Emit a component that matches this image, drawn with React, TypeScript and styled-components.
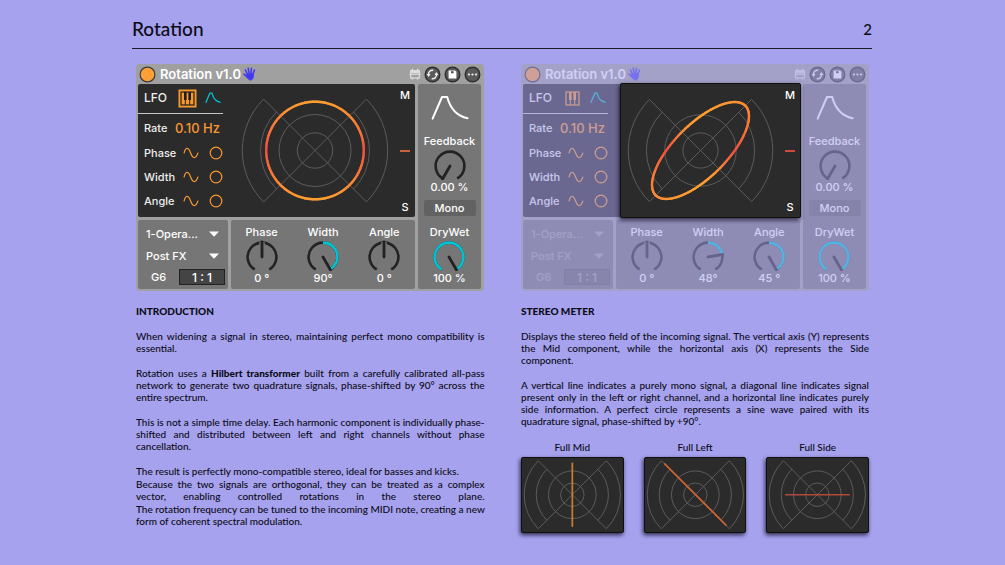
import React, { useId } from "react";
import styled, { createGlobalStyle, css } from "styled-components";

const GlobalStyle = createGlobalStyle`
  * { box-sizing: border-box; }
  body {
    margin: 0;
    background: #a6a2ee;
    color: #0b0a14;
    font-family: Lato, "Liberation Sans", sans-serif;
  }
  h1, h2, p, figure { margin: 0; }
  button, input, select { font: inherit; color: inherit; margin: 0; padding: 0; border: 0; background: none; }
  svg { display: block; }
`;

const ORANGE = "#f9982f";
const CYAN = "#00c4d4";
const INK = "#222222";

/* ---------- page ---------- */

const Page = styled.main`
  padding: 16px 133px 30px 132px;
`;

const TopBar = styled.header`
  display: flex;
  align-items: center;
  justify-content: space-between;
  height: 33px;
  padding-bottom: 6px;
  border-bottom: 1px solid #1b1a26;
`;

const Title = styled.h1`
  font-size: 19px;
  line-height: 26px;
  font-weight: 500;
`;

const PageNumber = styled.span`
  font-size: 15px;
  line-height: 26px;
  font-weight: 500;
`;

const Columns = styled.div`
  display: grid;
  grid-template-columns: 1fr 1fr;
  column-gap: 37px;
  padding: 15px 3px 0 4px;
`;

const Column = styled.section`
  min-width: 0;
`;

const Heading = styled.h2`
  margin: 14px 0 13px;
  font-size: 10px;
  line-height: 12px;
  font-weight: 900;
`;

const Copy = styled.div`
  display: grid;
  row-gap: 13px;
  font-size: 10px;
  line-height: 12px;
  font-weight: 500;
  text-align: justify;
`;

const Stanza = styled.div`
  display: grid;
  row-gap: 1px;
`;

const Paragraph = styled.p<{ $fill?: boolean }>`
  text-align-last: ${(p) => (p.$fill ? "justify" : "auto")};
`;

const Unbroken = styled.span`
  white-space: nowrap;
`;

const Strong = styled.strong`
  font-weight: 900;
`;

/* ---------- device frame ---------- */

const DeviceFrame = styled.div`
  position: relative;
  font-family: Inter, "Liberation Sans", sans-serif;
  font-size: 11px;
  line-height: 14px;
  font-weight: 500;
  color: #ffffff;
`;

const DeviceShell = styled.div<{ $dim: boolean }>`
  padding: 0 3px 2px 2px;
  border-radius: 4px;
  background: #a0a0a0;
  opacity: ${(p) => (p.$dim ? 0.48 : 1)};
`;

const DeviceHeader = styled.div`
  display: flex;
  align-items: center;
  height: 20px;
  padding-left: 1px;
`;

const DeviceName = styled.span`
  margin: 0 2px 0 4px;
  font-size: 13px;
  font-weight: 600;
`;

const HeaderIcons = styled.div`
  display: flex;
  align-items: center;
  gap: 3px;
  margin-left: auto;
`;

const IconButton = styled.button`
  display: block;
  cursor: pointer;
`;

const DeviceBody = styled.div`
  display: grid;
  grid-template-columns: 90px 1fr 63px;
  grid-template-rows: 133px 69px;
  gap: 3px;
`;

const panel = css`
  border-radius: 2px;
  background: #767676;
`;

const Screen = styled.div`
  grid-column: 1 / 3;
  display: flex;
  border-radius: 2px;
  background: #2b2b2b;
`;

const RoutingPanel = styled.div<{ $faded: boolean }>`
  ${panel}
  display: grid;
  align-content: space-between;
  padding: 6px 3px 4px 8px;

  & > * {
    opacity: ${(p) => (p.$faded ? 0.3 : 1)};
  }
`;

const KnobPanel = styled.div`
  ${panel}
  display: grid;
  grid-template-columns: repeat(3, 1fr);
  align-items: end;
`;

const OutputPanel = styled.div`
  ${panel}
  grid-column: 3;
  grid-row: 1 / 3;
  display: flex;
  flex-direction: column;
  align-items: center;
  padding-top: 11px;
`;

const OutputKnob = styled.div`
  margin-top: 13px;
`;

const MonoButton = styled.button`
  width: 52px;
  height: 16px;
  margin: 2px 0 auto;
  border-radius: 2px;
  background: #626262;
  text-align: center;
`;

/* ---------- LFO controls ---------- */

const LfoColumn = styled.div`
  flex: 0 0 97px;
`;

const LfoTop = styled.div`
  display: flex;
  align-items: center;
  width: 85px;
  height: 30px;
  padding: 0 2px 1px 6px;
  border-bottom: 1px solid #c8c8c8;
  font-size: 12px;
  color: #eeeeee;
`;

const LfoIcons = styled.div`
  display: flex;
  align-items: center;
  gap: 8px;
  margin-left: auto;
`;

const LfoRow = styled.div`
  display: flex;
  align-items: center;
  justify-content: space-between;
  width: 85px;
  height: 24px;
  padding: 0 0 0 6px;
  color: #eeeeee;
`;

const RateRow = styled(LfoRow)`
  height: 27px;
`;

const RateInput = styled.input`
  width: 48px;
  font-size: 13px;
  color: ${ORANGE};
`;

const Shapes = styled.div`
  display: flex;
  align-items: center;
  gap: 10px;
`;

/* ---------- routing ---------- */

const SelectWrap = styled.label`
  display: flex;
  align-items: center;
  height: 16px;
  padding-right: 6px;
`;

const Select = styled.select`
  flex: 1;
  min-width: 0;
  appearance: none;
  outline: none;
`;

const NoteRow = styled.div`
  display: flex;
  align-items: center;
  justify-content: space-between;
  padding-left: 5px;
`;

const RatioInput = styled.input`
  width: 46px;
  height: 16px;
  border: 1px solid #222222;
  background: #444444;
  font-size: 12px;
  text-align: center;
`;

/* ---------- knob ---------- */

const KnobLabel = styled.label`
  position: relative;
  display: flex;
  flex-direction: column;
  align-items: center;
  padding-bottom: 4px;
  white-space: nowrap;
`;

const KnobInput = styled.input`
  position: absolute;
  inset: 0;
  width: 100%;
  height: 100%;
  opacity: 0;
`;

const KnobName = styled.span`
  height: 15px;
`;

const polar = (cx: number, cy: number, r: number, deg: number) => {
  const a = ((deg - 90) * Math.PI) / 180;
  return [cx + r * Math.cos(a), cy + r * Math.sin(a)];
};

const arc = (cx: number, cy: number, r: number, from: number, to: number) => {
  const [x1, y1] = polar(cx, cy, r, from);
  const [x2, y2] = polar(cx, cy, r, to);
  return `M${x1} ${y1}A${r} ${r} 0 ${to - from > 180 ? 1 : 0} 1 ${x2} ${y2}`;
};

interface KnobProps {
  name: string;
  value: string;
  /* pointer angle, clockwise from the top, from -150 to 150 */
  angle: number;
  origin?: number;
}

function Knob({ name, value, angle, origin = 0 }: KnobProps) {
  const [nx, ny] = polar(17, 17, 15, angle);
  return (
    <KnobLabel>
      <KnobName>{name}</KnobName>
      <svg width="34" height="31" viewBox="0 0 34 31" fill="none" strokeWidth="2.6">
        <path d={arc(17, 17, 14.4, -150, 150)} stroke={INK} />
        {angle > origin && <path d={arc(17, 17, 14.4, origin, angle)} stroke={CYAN} />}
        {angle === 0 && <path d={`M17 17L${nx} ${ny}`} stroke="#767676" strokeWidth="5.4" />}
        <path d={`M17 17L${nx} ${ny}`} stroke={INK} strokeWidth="2.8" strokeLinecap="round" />
      </svg>
      <span>{value}</span>
      <KnobInput type="range" min={-150} max={150} defaultValue={angle} />
    </KnobLabel>
  );
}

/* ---------- meter ---------- */

const MeterBox = styled.div`
  display: flex;
  flex: 1;
  min-width: 0;
`;

const SpotlightMeter = styled(MeterBox)`
  position: absolute;
  top: 19px;
  left: 99px;
  right: 68px;
  height: 135px;
  border: 1px solid #101010;
  border-radius: 2px;
  background: #2b2b2b;
  box-shadow: -1px 2px 4px rgba(10, 8, 30, 0.8);
`;

const MeterSvg = styled.svg`
  flex: 1;
  min-width: 0;
  height: 133px;
`;

const MeterScale = styled.div`
  display: flex;
  flex-direction: column;
  align-items: center;
  justify-content: space-between;
  width: 20px;
  padding: 4px 0 3px;
`;

const Tick = styled.i<{ $color: string }>`
  width: 10px;
  height: 2px;
  background: ${(p) => p.$color};
`;

function PolarGrid({ cx, cy, width = 1 }: { cx: number; cy: number; width?: number }) {
  const d = 72.7 * Math.SQRT1_2;
  return (
    <g fill="none" stroke="#5c5c5c" strokeWidth={width}>
      <circle cx={cx} cy={cy} r="17.7" />
      <circle cx={cx} cy={cy} r="36" />
      {[54.5, 72.7].map((r) => (
        <g key={r}>
          <path d={arc(cx, cy, r, 45, 135)} />
          <path d={arc(cx, cy, r, 225, 315)} />
        </g>
      ))}
      <path d={`M${cx - d} ${cy - d}L${cx + d} ${cy + d}M${cx - d} ${cy + d}L${cx + d} ${cy - d}`} />
    </g>
  );
}

/* Figure traced by two sines; the hue moves from orange (mid) to red (side). */
function Trace({ cx, cy, phase }: { cx: number; cy: number; phase: number }) {
  const steps = 120;
  const point = (i: number) => {
    const t = (i / steps) * Math.PI * 2;
    return [48.8 * Math.cos(t), -48.8 * Math.cos(t + (phase * Math.PI) / 180)];
  };
  return (
    <g strokeWidth="2.4" strokeLinecap="round">
      {Array.from({ length: steps }, (_, i) => {
        const [x1, y1] = point(i);
        const [x2, y2] = point(i + 1);
        const angle = Math.atan2(Math.abs(y1), Math.abs(x1)) / (Math.PI / 2);
        const side = (1 - angle) ** 2;
        const mix = (a: number, b: number) => Math.round(a + (b - a) * side);
        return (
          <path
            key={i}
            d={`M${cx + x1} ${cy + y1}L${cx + x2} ${cy + y2}`}
            stroke={`rgb(${mix(255, 238)}, ${mix(158, 78)}, ${mix(48, 64)})`}
          />
        );
      })}
    </g>
  );
}

function MeterContent({ phase, tick }: { phase: number; tick: string }) {
  return (
    <>
      <MeterSvg viewBox="0 0 160 133">
        <PolarGrid cx={80} cy={66.5} />
        <Trace cx={80} cy={66.5} phase={phase} />
      </MeterSvg>
      <MeterScale>
        <span>M</span>
        <Tick $color={tick} />
        <span>S</span>
      </MeterScale>
    </>
  );
}

/* ---------- icons ---------- */

const HandIcon = () => (
  <svg width="13" height="14" viewBox="0 0 13 14" fill="none" stroke="#4338f0" strokeLinecap="round">
    <path d="M4.6 7.6L2.4 3M6.2 6.6L5.2 1.4M8 6.6L8.4 1.4M9.8 7.4L11.4 3.2" strokeWidth="1.6" />
    <path d="M4.8 10.4L1 7.2" strokeWidth="1.7" />
    <path d="M3.9 7.2L10.2 6.6L10.5 9.6C10.2 11.6 9.2 13.2 7.6 13.2C5.6 13.2 4.6 11.4 3.4 9.8Z" fill="#4338f0" strokeWidth=".6" />
  </svg>
);

const PowerIcon = () => (
  <svg width="17" height="17" viewBox="0 0 17 17">
    <circle cx="8.5" cy="8.5" r="7.4" fill="#ff9f38" stroke="#3a3a3a" strokeWidth="1.2" />
  </svg>
);

const RackIcon = () => (
  <svg width="12" height="12" viewBox="0 0 12 12" fill="none" stroke="#dcdcdc">
    <rect x="1.6" y="2.6" width="8.8" height="7.4" strokeWidth="1.2" />
    <path d="M3.4 .8v2.4M8.6 .8v2.4M3.4 9.6v1.8M8.6 9.6v1.8" strokeWidth="1.4" />
    <path d="M.4 6.3h11.2" strokeWidth="1.2" />
    <path d="M1.6 4h8.8" strokeWidth="2.4" />
  </svg>
);

const RoundIcon = ({ children }: { children: React.ReactNode }) => (
  <svg width="17" height="17" viewBox="0 0 17 17" fill="none">
    <circle cx="8.5" cy="8.5" r="7.3" fill="#5a5a5a" stroke="#2e2e2e" strokeWidth="1.4" />
    {children}
  </svg>
);

const SwapGlyph = () => (
  <RoundIcon>
    <path d="M9.3 4.3C6.4 3.8 4.3 5.8 4.5 8.6M7.7 12.7C10.6 13.2 12.7 11.2 12.5 8.4" stroke="#f0f0f0" strokeWidth="1.4" />
    <path d="M2.6 8h3.9L4.7 11zM14.4 9h-3.9L12.3 6z" fill="#f0f0f0" />
  </RoundIcon>
);

const SaveGlyph = () => (
  <RoundIcon>
    <path d="M4.6 4.4h6.4l1.4 1.4v6.6H4.6z" fill="#ffffff" />
    <path d="M7 5.2h2.6v2H7z" fill="#4a4a4a" />
  </RoundIcon>
);

const MoreGlyph = () => (
  <RoundIcon>
    <g fill="#f4f4f4">
      <circle cx="5" cy="8.5" r="1.1" />
      <circle cx="8.5" cy="8.5" r="1.1" />
      <circle cx="12" cy="8.5" r="1.1" />
    </g>
  </RoundIcon>
);

const KeysIcon = ({ active }: { active: boolean }) => {
  const ink = active ? "#1d1d1d" : ORANGE;
  return (
    <svg width="19" height="19" viewBox="0 0 19 19">
      {active && <rect x=".5" y=".5" width="18" height="18" fill={ORANGE} />}
      <rect x="3" y="3" width="13" height="13" fill="none" stroke={ink} strokeWidth="1.2" />
      <path d="M7.3 3v13M11.7 3v13" stroke={ink} strokeWidth="1" />
      <path d="M7.3 3v8M11.7 3v8" stroke={ink} strokeWidth="2.6" />
    </svg>
  );
};

const CurveIcon = () => (
  <svg width="16" height="12" viewBox="0 0 16 12" fill="none" stroke={CYAN} strokeWidth="1.3">
    <path d="M.8 10.8L4.8 1.2H7C8 5.6 10.2 9.8 15.6 10.3" strokeLinejoin="round" />
  </svg>
);

const EnvelopeIcon = () => (
  <svg width="38" height="26" viewBox="0 0 38 26" fill="none" stroke="#ffffff" strokeWidth="2">
    <path d="M1.6 23.6L11 2h5.2C19 12.4 24.5 20.8 36.6 23.2" strokeLinecap="round" strokeLinejoin="round" />
  </svg>
);

const SineIcon = () => (
  <svg width="16" height="12" viewBox="0 0 16 12" fill="none" stroke={ORANGE} strokeWidth="1.2">
    <path d="M1 6.4C2.5 -.2 5.3 -.2 7.6 6C9.8 12.2 13 12 15 5.6" />
  </svg>
);

const RingIcon = () => (
  <svg width="14" height="14" viewBox="0 0 14 14" fill="none" stroke={ORANGE} strokeWidth="1.2">
    <circle cx="7" cy="7" r="5.8" />
  </svg>
);

const ArrowIcon = () => (
  <svg width="10" height="6" viewBox="0 0 10 6" fill="#ffffff">
    <path d="M0 .5h10L5 5.8z" />
  </svg>
);

/* ---------- device ---------- */

interface DeviceProps {
  dim?: boolean;
  width: { value: string; angle: number };
  angle: { value: string; angle: number };
}

function Device({ dim = false, width, angle }: DeviceProps) {
  const id = useId();
  return (
    <DeviceFrame>
      <DeviceShell $dim={dim}>
        <DeviceHeader>
          <IconButton aria-label="Device on"><PowerIcon /></IconButton>
          <DeviceName>Rotation v1.0</DeviceName>
          <HandIcon />
          <HeaderIcons>
            <RackIcon />
            <IconButton aria-label="Hot swap"><SwapGlyph /></IconButton>
            <IconButton aria-label="Save"><SaveGlyph /></IconButton>
            <IconButton aria-label="More"><MoreGlyph /></IconButton>
          </HeaderIcons>
        </DeviceHeader>
        <DeviceBody>
          <Screen>
            <LfoColumn>
              <LfoTop>
                LFO
                <LfoIcons>
                  <IconButton aria-label="Follow notes"><KeysIcon active={!dim} /></IconButton>
                  <IconButton aria-label="Envelope"><CurveIcon /></IconButton>
                </LfoIcons>
              </LfoTop>
              <RateRow>
                <label htmlFor={`${id}rate`}>Rate</label>
                <RateInput id={`${id}rate`} defaultValue="0.10 Hz" />
              </RateRow>
              {["Phase", "Width", "Angle"].map((name) => (
                <LfoRow key={name}>
                  {name}
                  <Shapes>
                    <IconButton aria-label={`${name} wave`}><SineIcon /></IconButton>
                    <IconButton aria-label={`${name} polarity`}><RingIcon /></IconButton>
                  </Shapes>
                </LfoRow>
              ))}
            </LfoColumn>
            {!dim && (
              <MeterBox>
                <MeterContent phase={90} tick="#c8643c" />
              </MeterBox>
            )}
          </Screen>
          <RoutingPanel $faded={dim}>
            <SelectWrap>
              <Select aria-label="Source"><option>1-Opera...</option></Select>
              <ArrowIcon />
            </SelectWrap>
            <SelectWrap>
              <Select aria-label="Tap point"><option>Post FX</option></Select>
              <ArrowIcon />
            </SelectWrap>
            <NoteRow>
              <span>G6</span>
              <RatioInput aria-label="Ratio" defaultValue="1 : 1" />
            </NoteRow>
          </RoutingPanel>
          <KnobPanel>
            <Knob name="Phase" value="0 °" angle={0} />
            <Knob name="Width" {...width} />
            <Knob name="Angle" {...angle} />
          </KnobPanel>
          <OutputPanel>
            <EnvelopeIcon />
            <OutputKnob>
              <Knob name="Feedback" value="0.00 %" angle={-150} origin={-150} />
            </OutputKnob>
            <MonoButton>Mono</MonoButton>
            <Knob name="DryWet" value="100 %" angle={150} origin={-150} />
          </OutputPanel>
        </DeviceBody>
      </DeviceShell>
      {dim && (
        <SpotlightMeter>
          <MeterContent phase={45} tick="#d0483e" />
        </SpotlightMeter>
      )}
    </DeviceFrame>
  );
}

/* ---------- example figures ---------- */

const Figures = styled.div`
  display: grid;
  grid-template-columns: repeat(3, 1fr);
  column-gap: 20px;
  margin-top: 14px;
`;

const Figure = styled.figure`
  display: flex;
  flex-direction: column;
  gap: 4px;
`;

const Caption = styled.figcaption`
  font-size: 10px;
  line-height: 12px;
  font-weight: 500;
  text-align: center;
`;

const FigureBox = styled.div`
  border: 1px solid #101010;
  border-radius: 2px;
  background: #2b2b2b;
  box-shadow: -1px 2px 4px rgba(10, 8, 30, 0.8);
`;

const FIGURES = [
  { label: "Full Mid", d: "M76 7V104", color: "#c4812f" },
  { label: "Full Left", d: "M29 8L123 102", color: "#cc6434" },
  { label: "Full Side", d: "M27 55.5H125", color: "#b04a3c" },
];

export default function App() {
  return (
    <>
      <GlobalStyle />
      <Page>
        <TopBar>
          <Title>Rotation</Title>
          <PageNumber>2</PageNumber>
        </TopBar>
        <Columns>
          <Column>
            <Device width={{ value: "90°", angle: 150 }} angle={{ value: "0 °", angle: 0 }} />
            <Heading>INTRODUCTION</Heading>
            <Copy>
              <Paragraph>
                When widening a signal in stereo, maintaining perfect mono compatibility is essential.
              </Paragraph>
              <Paragraph>
                Rotation uses a <Strong>Hilbert transformer</Strong> built from a carefully calibrated all-pass
                network to generate two quadrature signals, phase-shifted by 90° across the entire spectrum.
              </Paragraph>
              <Paragraph>
                This is not a simple time delay. Each harmonic component is individually phase-shifted and
                distributed between left and right channels without phase cancellation.
              </Paragraph>
              <Stanza>
                <Paragraph>
                  The result is perfectly mono-compatible stereo, ideal for basses and kicks.
                </Paragraph>
                <Paragraph $fill>
                  Because the two signals are orthogonal, they can be treated as a complex vector, enabling
                  controlled rotations in the stereo plane.
                </Paragraph>
                <Paragraph>
                  <Unbroken>
                    The rotation frequency can be tuned to the incoming MIDI note, creating a new
                  </Unbroken>{" "}
                  form of coherent spectral modulation.
                </Paragraph>
              </Stanza>
            </Copy>
          </Column>
          <Column>
            <Device dim width={{ value: "48°", angle: 80 }} angle={{ value: "45 °", angle: 150 }} />
            <Heading>STEREO METER</Heading>
            <Copy>
              <Paragraph>
                Displays the stereo field of the incoming signal. The vertical axis (Y) represents the Mid
                component, while the horizontal axis (X) represents the Side component.
              </Paragraph>
              <Paragraph>
                A vertical line indicates a purely mono signal, a diagonal line indicates signal present only in
                the left or right channel, and a horizontal line indicates purely side information. A perfect
                circle represents a sine wave paired with its quadrature signal, phase-shifted by +90°.
              </Paragraph>
            </Copy>
            <Figures>
              {FIGURES.map((f) => (
                <Figure key={f.label}>
                  <Caption>{f.label}</Caption>
                  <FigureBox>
                    <svg width="100%" viewBox="0 0 152 112">
                      <PolarGrid cx={76} cy={55.5} width={1.5} />
                      <path d={f.d} stroke={f.color} strokeWidth="2.6" />
                    </svg>
                  </FigureBox>
                </Figure>
              ))}
            </Figures>
          </Column>
        </Columns>
      </Page>
    </>
  );
}
